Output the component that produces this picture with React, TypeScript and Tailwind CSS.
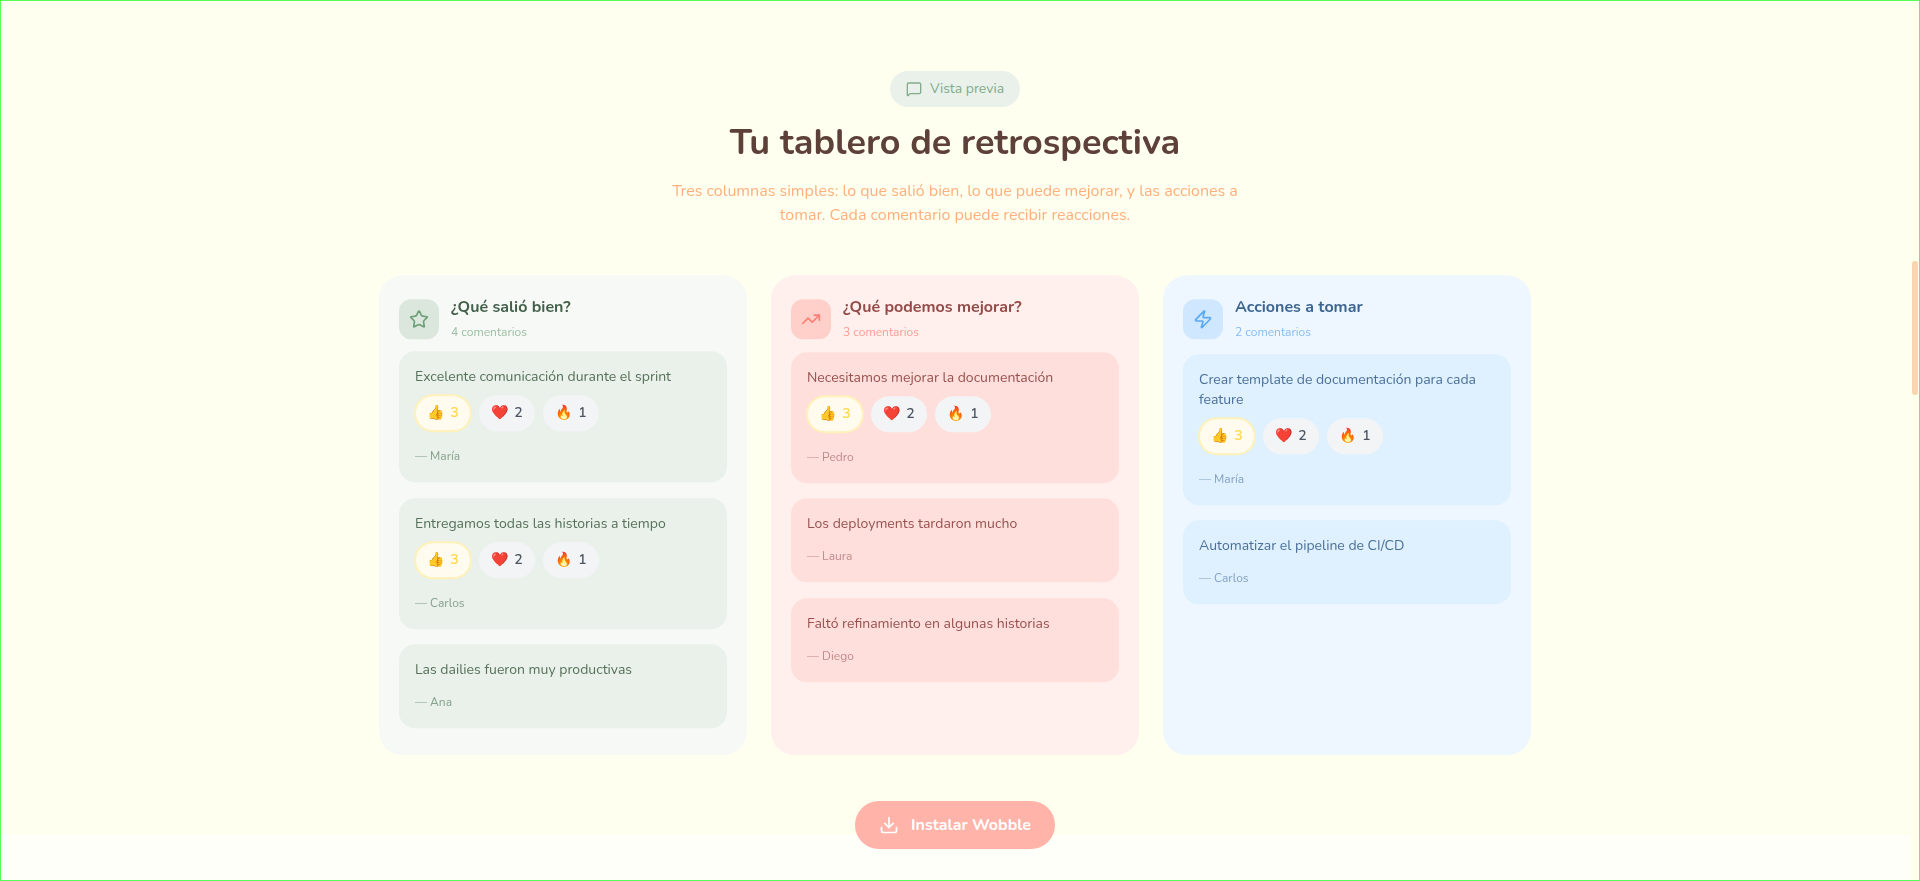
import { Download, MessageSquare, Star, TrendingUp, Zap } from "lucide-react"
import type { ReactNode } from "react"

type Comment = {
  text: string
  author: string
  reactions?: boolean
}

type Tone = {
  panel: string
  iconBox: string
  icon: ReactNode
  title: string
  count: string
  card: string
  body: string
  author: string
  header: string
}

const columns: { heading: string; total: string; tone: Tone; comments: Comment[] }[] = [
  {
    heading: "¿Qué salió bien?",
    total: "4 comentarios",
    tone: {
      panel: "bg-[#f6f9f6]",
      iconBox: "bg-[#dbe7dc]",
      icon: <Star className="h-5 w-5 text-[#6f9f78]" />,
      title: "text-[#44604b]",
      count: "text-[#9cbfa3]",
      card: "bg-[#e9f1ea]",
      body: "text-[#567059]",
      author: "text-[#86a08c]",
      header: "mb-3",
    },
    comments: [
      { text: "Excelente comunicación durante el sprint", author: "María", reactions: true },
      { text: "Entregamos todas las historias a tiempo", author: "Carlos", reactions: true },
      { text: "Las dailies fueron muy productivas", author: "Ana" },
    ],
  },
  {
    heading: "¿Qué podemos mejorar?",
    total: "3 comentarios",
    tone: {
      panel: "bg-[#fff0ee]",
      iconBox: "bg-[#ffcfc9]",
      icon: <TrendingUp className="h-5 w-5 text-[#ff7d73]" />,
      title: "text-[#944a47]",
      count: "text-[#ff9c94]",
      card: "bg-[#ffdfdc]",
      body: "text-[#98514f]",
      author: "text-[#c08a88]",
      header: "mb-[12.5px]",
    },
    comments: [
      { text: "Necesitamos mejorar la documentación", author: "Pedro", reactions: true },
      { text: "Los deployments tardaron mucho", author: "Laura" },
      { text: "Faltó refinamiento en algunas historias", author: "Diego" },
    ],
  },
  {
    heading: "Acciones a tomar",
    total: "2 comentarios",
    tone: {
      panel: "bg-[#eef7ff]",
      iconBox: "bg-[#cfe7ff]",
      icon: <Zap className="h-5 w-5 text-[#5aa9f5]" />,
      title: "text-[#3c6590]",
      count: "text-[#86bdf5]",
      card: "bg-[#dff0ff]",
      body: "text-[#4a709a]",
      author: "text-[#83a3c4]",
      header: "mb-[14.5px]",
    },
    comments: [
      { text: "Crear template de documentación para cada feature", author: "María", reactions: true },
      { text: "Automatizar el pipeline de CI/CD", author: "Carlos" },
    ],
  },
]

function Reactions() {
  return (
    <div className="mt-2 flex items-center gap-2">
      <span className="flex h-9 w-14 items-center justify-center gap-1.5 rounded-full border border-[#fff1b8] bg-[#fffcef] text-sm font-semibold text-[#ffd84d] ring-1 ring-[#fff1b8]">
        <span>👍</span>
        <span>3</span>
      </span>
      <span className="flex h-9 w-14 items-center justify-center gap-1.5 rounded-full bg-[#f3f4f6] text-sm font-semibold text-[#4b5563]">
        <span>❤️</span>
        <span>2</span>
      </span>
      <span className="flex h-9 w-14 items-center justify-center gap-1.5 rounded-full bg-[#f3f4f6] text-sm font-semibold text-[#4b5563]">
        <span>🔥</span>
        <span>1</span>
      </span>
    </div>
  )
}

export default function App() {
  return (
    <div className="relative flex h-[881px] overflow-hidden bg-[#fffff0] font-['Nunito','Lato','Noto_Sans',sans-serif]">
      <div className="h-full w-[1910px] bg-[#fffffa]">
        <div className="flex h-[835px] flex-col items-center bg-[#fffff0] pt-[71px]">
          <div className="flex h-9 shrink-0 items-center gap-2 rounded-full bg-[#e9f1ea] px-4 text-sm text-[#84ab8c]">
            <MessageSquare className="h-4 w-4" />
            Vista previa
          </div>
          <div className="flex shrink-0 -translate-y-[0.5px] flex-col items-center will-change-transform">
            <h1 className="mt-4 text-4xl font-bold text-[#5d4037]">Tu tablero de retrospectiva</h1>
            <p className="mt-4 w-[580px] text-center text-base leading-6 text-[#ffb07c]">
              Tres columnas simples: lo que salió bien, lo que puede mejorar, y las acciones a tomar. Cada comentario
              puede recibir reacciones.
            </p>
          </div>

          <div className="mt-12 grid h-[480px] w-[1152px] shrink-0 translate-y-[0.3px] grid-cols-3 gap-6 will-change-transform">
            {columns.map((col) => (
              <div key={col.heading} className={`rounded-3xl p-5 ${col.tone.panel}`}>
                <div className={`flex items-end gap-3 ${col.tone.header}`}>
                  <div className={`flex h-10 w-10 items-center justify-center rounded-xl ${col.tone.iconBox}`}>
                    {col.tone.icon}
                  </div>
                  <div>
                    <div className={`text-base font-bold ${col.tone.title}`}>{col.heading}</div>
                    <div className={`mt-[5px] -mb-px text-xs ${col.tone.count}`}>{col.total}</div>
                  </div>
                </div>
                <div className="flex flex-col gap-[15.5px]">
                  {col.comments.map((c) => (
                    <div key={c.text} className={`rounded-2xl px-4 pt-4 pb-[18px] ${col.tone.card}`}>
                      <p className={`text-sm leading-5 ${col.tone.body}`}>{c.text}</p>
                      {c.reactions && <Reactions />}
                      <p className={`text-xs ${c.reactions ? "mt-[17px]" : "mt-[14px]"} ${col.tone.author}`}>
                        — {c.author}
                      </p>
                    </div>
                  ))}
                </div>
              </div>
            ))}
          </div>

          <button className="mt-[46px] flex h-12 shrink-0 items-center gap-3 rounded-full bg-[#ffb3a9] px-6 text-base font-bold text-white">
            <Download className="h-5 w-5" />
            Instalar Wobble
          </button>
        </div>
      </div>

      {/* scroll thumb and the green outline sit over the page */}
      <div className="absolute top-[261px] right-[2px] h-[134px] w-[6px] rounded-full bg-[#ffd2b0]" />
      <div className="pointer-events-none absolute inset-0 border border-[#55ff55]" />
    </div>
  )
}
